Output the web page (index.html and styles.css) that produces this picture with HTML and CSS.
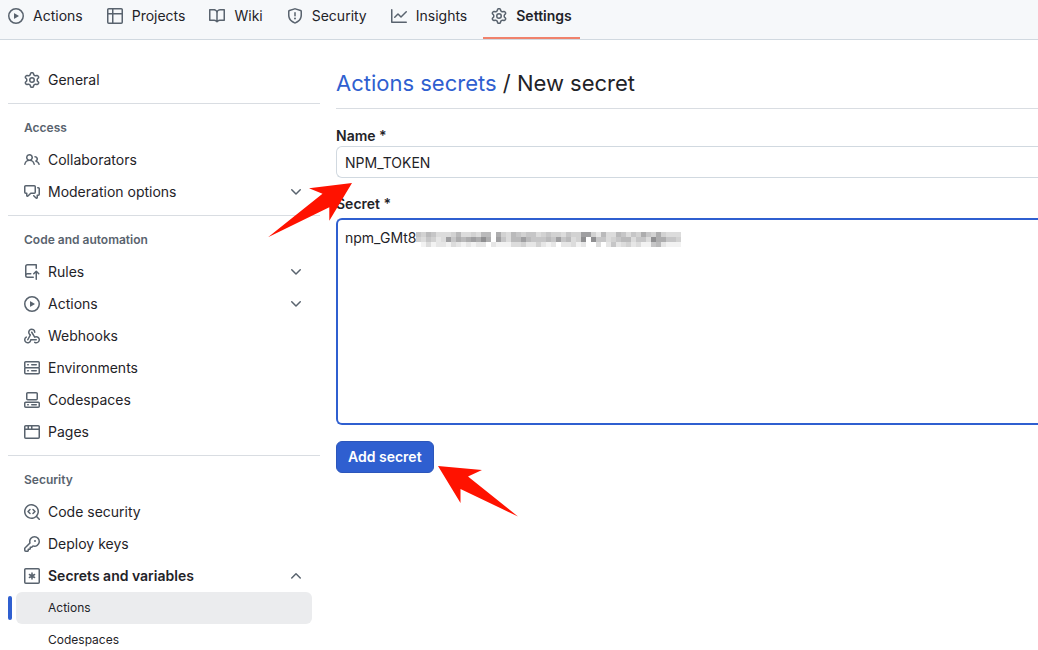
FILE: index.html
```html
<!DOCTYPE html>
<html lang="en">
<head>
<meta charset="utf-8">
<title>Actions secrets / New secret</title>
<link rel="stylesheet" href="styles.css">
</head>
<body>
<svg class="sprite" aria-hidden="true">
  <symbol id="play" viewBox="0 0 16 16"><path d="M8 0a8 8 0 1 1 0 16A8 8 0 0 1 8 0ZM1.5 8a6.5 6.5 0 1 0 13 0 6.5 6.5 0 0 0-13 0Zm4.879-2.773 4.264 2.559a.25.25 0 0 1 0 .428l-4.264 2.559A.25.25 0 0 1 6 10.559V5.442a.25.25 0 0 1 .379-.215Z"/></symbol>
  <symbol id="table" viewBox="0 0 16 16"><path d="M0 1.75C0 .784.784 0 1.75 0h12.5C15.216 0 16 .784 16 1.75v12.5A1.75 1.75 0 0 1 14.25 16H1.75A1.75 1.75 0 0 1 0 14.25ZM6.5 6.5v8h7.75a.25.25 0 0 0 .25-.25V6.5Zm8-1.5V1.75a.25.25 0 0 0-.25-.25H6.5V5Zm-13 1.5v7.75c0 .138.112.25.25.25H5v-8ZM5 5V1.5H1.75a.25.25 0 0 0-.25.25V5Z"/></symbol>
  <symbol id="book" viewBox="0 0 16 16"><path d="M0 1.75A.75.75 0 0 1 .75 1h4.253c1.227 0 2.317.59 3 1.501A3.743 3.743 0 0 1 11.006 1h4.245a.75.75 0 0 1 .75.75v10.5a.75.75 0 0 1-.75.75h-4.507a2.25 2.25 0 0 0-1.591.659l-.622.621a.75.75 0 0 1-1.06 0l-.622-.621A2.25 2.25 0 0 0 5.258 13H.75a.75.75 0 0 1-.75-.75Zm7.251 10.324.004-5.073-.002-2.253A2.25 2.25 0 0 0 5.003 2.5H1.5v9h3.757a3.75 3.75 0 0 1 1.994.574ZM8.755 4.75l-.004 7.322a3.752 3.752 0 0 1 1.992-.572H14.5v-9h-3.495a2.25 2.25 0 0 0-2.25 2.25Z"/></symbol>
  <symbol id="shield" viewBox="0 0 16 16"><path d="M7.467.133a1.748 1.748 0 0 1 1.066 0l5.25 1.68A1.75 1.75 0 0 1 15 3.48V7c0 1.566-.32 3.182-1.303 4.682-.983 1.498-2.585 2.813-5.032 3.855a1.697 1.697 0 0 1-1.33 0c-2.447-1.042-4.049-2.357-5.032-3.855C1.32 10.182 1 8.566 1 7V3.48a1.75 1.75 0 0 1 1.217-1.667Zm.61 1.429a.25.25 0 0 0-.153 0l-5.25 1.68a.25.25 0 0 0-.174.238V7c0 1.358.275 2.666 1.057 3.86.784 1.194 2.121 2.34 4.366 3.297a.196.196 0 0 0 .154 0c2.245-.956 3.582-2.104 4.366-3.298C13.225 9.666 13.5 8.36 13.5 7V3.48a.251.251 0 0 0-.174-.237l-5.25-1.68ZM8.75 4.75v3a.75.75 0 0 1-1.5 0v-3a.75.75 0 0 1 1.5 0ZM9 10.5a1 1 0 1 1-2 0 1 1 0 0 1 2 0Z"/></symbol>
  <symbol id="graph" viewBox="0 0 16 16"><path d="M1.5 1.75V13.5h13.75a.75.75 0 0 1 0 1.5H.75a.75.75 0 0 1-.75-.75V1.75a.75.75 0 0 1 1.5 0Zm14.28 2.53-5.25 5.25a.75.75 0 0 1-1.06 0L7 7.06 4.28 9.78a.751.751 0 0 1-1.042-.018.751.751 0 0 1-.018-1.042l3.25-3.25a.75.75 0 0 1 1.06 0L10 7.94l4.72-4.72a.751.751 0 0 1 1.042.018.751.751 0 0 1 .018 1.042Z"/></symbol>
  <symbol id="gear" viewBox="0 0 16 16"><path d="M8 0a8.2 8.2 0 0 1 .701.031C9.444.095 9.99.645 10.16 1.29l.288 1.107c.018.066.079.158.212.224.231.114.454.243.668.386.123.082.233.09.299.071l1.103-.303c.644-.176 1.392.021 1.82.63.27.385.506.792.704 1.218.315.675.111 1.422-.364 1.891l-.814.806c-.049.048-.098.147-.088.294.016.257.016.515 0 .772-.01.147.038.246.088.294l.814.806c.475.469.679 1.216.364 1.891a7.977 7.977 0 0 1-.704 1.217c-.428.61-1.176.807-1.82.63l-1.102-.302c-.067-.019-.177-.011-.3.071a5.909 5.909 0 0 1-.668.386c-.133.066-.194.158-.211.224l-.29 1.106c-.168.646-.715 1.196-1.458 1.26a8.006 8.006 0 0 1-1.402 0c-.743-.064-1.289-.614-1.458-1.26l-.289-1.106c-.018-.066-.079-.158-.212-.224a5.738 5.738 0 0 1-.668-.386c-.123-.082-.233-.09-.299-.071l-1.103.303c-.644.176-1.392-.021-1.82-.63a8.12 8.12 0 0 1-.704-1.218c-.315-.675-.111-1.422.363-1.891l.815-.806c.05-.048.098-.147.088-.294a6.214 6.214 0 0 1 0-.772c.01-.147-.038-.246-.088-.294l-.815-.806C.635 6.045.431 5.298.746 4.623a7.92 7.92 0 0 1 .704-1.217c.428-.61 1.176-.807 1.82-.63l1.102.302c.067.019.177.011.3-.071.214-.143.437-.272.668-.386.133-.066.194-.158.211-.224l.29-1.106C6.009.645 6.556.095 7.299.03 7.53.01 7.764 0 8 0Zm-.571 1.525c-.036.003-.108.036-.137.146l-.289 1.105c-.147.561-.549.967-.998 1.189-.173.086-.34.183-.5.29-.417.278-.97.423-1.529.27l-1.103-.303c-.109-.03-.175.016-.195.045-.22.312-.412.644-.573.99-.014.031-.021.11.059.19l.815.806c.411.406.562.957.53 1.456a4.709 4.709 0 0 0 0 .582c.032.499-.119 1.05-.53 1.456l-.815.806c-.081.08-.073.159-.059.19.162.346.353.677.573.989.02.03.085.076.195.046l1.102-.303c.56-.153 1.113-.008 1.53.27.161.107.328.204.501.29.447.222.85.629.997 1.189l.289 1.105c.029.109.101.143.137.146a6.6 6.6 0 0 0 1.142 0c.036-.003.108-.036.137-.146l.289-1.105c.147-.561.549-.967.998-1.189.173-.086.34-.183.5-.29.417-.278.97-.423 1.529-.27l1.103.303c.109.029.175-.016.195-.045.22-.313.411-.644.573-.99.014-.031.021-.11-.059-.19l-.815-.806c-.411-.406-.562-.957-.53-1.456a4.709 4.709 0 0 0 0-.582c-.032-.499.119-1.05.53-1.456l.815-.806c.081-.08.073-.159.059-.19a6.464 6.464 0 0 0-.573-.989c-.02-.03-.085-.076-.195-.046l-1.102.303c-.56.153-1.113.008-1.53-.27a4.44 4.44 0 0 0-.501-.29c-.447-.222-.85-.629-.997-1.189l-.289-1.105c-.029-.11-.101-.143-.137-.146a6.6 6.6 0 0 0-1.142 0ZM11 8a3 3 0 1 1-6 0 3 3 0 0 1 6 0ZM9.5 8a1.5 1.5 0 1 0-3.001.001A1.5 1.5 0 0 0 9.5 8Z"/></symbol>
  <symbol id="people" viewBox="0 0 16 16"><path d="M2 5.5a3.5 3.5 0 1 1 5.898 2.549 5.508 5.508 0 0 1 3.034 4.084.75.75 0 1 1-1.482.235 4 4 0 0 0-7.9 0 .75.75 0 0 1-1.482-.236A5.507 5.507 0 0 1 3.102 8.05 3.493 3.493 0 0 1 2 5.5ZM11 4a3.001 3.001 0 0 1 2.22 5.018 5.01 5.01 0 0 1 2.56 3.012.749.749 0 0 1-.885.954.752.752 0 0 1-.549-.514 3.507 3.507 0 0 0-2.522-2.372.75.75 0 0 1-.574-.73v-.352a.75.75 0 0 1 .416-.672A1.5 1.5 0 0 0 11 5.5.75.75 0 0 1 11 4Zm-5.5-.5a2 2 0 1 0-.001 3.999A2 2 0 0 0 5.5 3.5Z"/></symbol>
  <symbol id="discussion" viewBox="0 0 16 16"><path d="M1.75 1h8.5c.966 0 1.75.784 1.75 1.75v5.5A1.75 1.75 0 0 1 10.25 10H7.061l-2.574 2.573A1.458 1.458 0 0 1 2 11.543V10h-.25A1.75 1.75 0 0 1 0 8.25v-5.5C0 1.784.784 1 1.75 1ZM1.5 2.75v5.5c0 .138.112.25.25.25h1a.75.75 0 0 1 .75.75v2.19l2.72-2.72a.749.749 0 0 1 .53-.22h3.5a.25.25 0 0 0 .25-.25v-5.5a.25.25 0 0 0-.25-.25h-8.5a.25.25 0 0 0-.25.25Zm13 2a.25.25 0 0 0-.25-.25h-.5a.75.75 0 0 1 0-1.5h.5c.966 0 1.75.784 1.75 1.75v5.5A1.75 1.75 0 0 1 14.25 12H14v1.543a1.458 1.458 0 0 1-2.487 1.03L9.22 12.28a.749.749 0 0 1 .326-1.275.749.749 0 0 1 .734.215l2.22 2.22v-2.19a.75.75 0 0 1 .75-.75h1a.25.25 0 0 0 .25-.25Z"/></symbol>
  <symbol id="repo-push" viewBox="0 0 16 16"><path d="M1 2.5A2.5 2.5 0 0 1 3.5 0h8.75a.75.75 0 0 1 .75.75v3.5a.75.75 0 0 1-1.5 0V1.5h-8a1 1 0 0 0-1 1v6.708A2.493 2.493 0 0 1 3.5 9h3.25a.75.75 0 0 1 0 1.5H3.5a1 1 0 0 0 0 2h5.75a.75.75 0 0 1 0 1.5H3.5A2.5 2.5 0 0 1 1 11.5Zm13.23 7.79-1.224-1.224v6.184a.75.75 0 0 1-1.5 0V9.066L10.28 10.29a.75.75 0 0 1-1.06-1.061l2.505-2.504a.75.75 0 0 1 1.06 0L15.29 9.23a.751.751 0 0 1-.018 1.042.751.751 0 0 1-1.042.018Z"/></symbol>
  <symbol id="webhook" viewBox="0 0 16 16"><path d="M5.5 4.25a2.25 2.25 0 0 1 4.5 0 .75.75 0 0 0 1.5 0 3.75 3.75 0 1 0-6.14 2.889l-2.272 4.258a.75.75 0 0 0 1.324.706L7 7.25a.75.75 0 0 0-.309-1.015A2.25 2.25 0 0 1 5.5 4.25Z"/><path d="M7.364 3.607a.75.75 0 0 1 1.03.257l2.608 4.349a3.75 3.75 0 1 1-.628 6.785.75.75 0 0 1 .752-1.299 2.25 2.25 0 1 0-.033-3.88.75.75 0 0 1-1.03-.256L7.107 4.636a.75.75 0 0 1 .257-1.03Z"/><path d="M2.9 8.776A.75.75 0 0 1 2.625 9.8 2.25 2.25 0 1 0 6 11.75a.75.75 0 0 1 .75-.751h5.5a.75.75 0 0 1 0 1.5H7.425a3.751 3.751 0 1 1-5.55-3.998.75.75 0 0 1 1.024.274Z"/></symbol>
  <symbol id="server" viewBox="0 0 16 16"><path d="M1.75 1h12.5c.966 0 1.75.784 1.75 1.75v4c0 .372-.116.717-.314 1 .198.283.314.628.314 1v4a1.75 1.75 0 0 1-1.75 1.75H1.75A1.75 1.75 0 0 1 0 12.75v-4c0-.358.109-.707.314-1a1.739 1.739 0 0 1-.314-1v-4C0 1.784.784 1 1.75 1ZM1.5 2.75v4c0 .138.112.25.25.25h12.5a.25.25 0 0 0 .25-.25v-4a.25.25 0 0 0-.25-.25H1.75a.25.25 0 0 0-.25.25Zm.25 5.75a.25.25 0 0 0-.25.25v4c0 .138.112.25.25.25h12.5a.25.25 0 0 0 .25-.25v-4a.25.25 0 0 0-.25-.25ZM7 4.75A.75.75 0 0 1 7.75 4h4.5a.75.75 0 0 1 0 1.5h-4.5A.75.75 0 0 1 7 4.75ZM7.75 10h4.5a.75.75 0 0 1 0 1.5h-4.5a.75.75 0 0 1 0-1.5ZM3 4.75A.75.75 0 0 1 3.75 4h.5a.75.75 0 0 1 0 1.5h-.5A.75.75 0 0 1 3 4.75ZM3.75 10h.5a.75.75 0 0 1 0 1.5h-.5a.75.75 0 0 1 0-1.5Z"/></symbol>
  <symbol id="codespaces" viewBox="0 0 16 16"><path d="M0 11.25c0-.966.784-1.75 1.75-1.75h12.5c.966 0 1.75.784 1.75 1.75v3A1.75 1.75 0 0 1 14.25 16H1.75A1.75 1.75 0 0 1 0 14.25Zm2-9.5C2 .784 2.784 0 3.75 0h8.5C13.216 0 14 .784 14 1.75v5a1.75 1.75 0 0 1-1.75 1.75h-8.5A1.75 1.75 0 0 1 2 6.75Zm1.75-.25a.25.25 0 0 0-.25.25v5c0 .138.112.25.25.25h8.5a.25.25 0 0 0 .25-.25v-5a.25.25 0 0 0-.25-.25Zm-2 9.5a.25.25 0 0 0-.25.25v3c0 .138.112.25.25.25h12.5a.25.25 0 0 0 .25-.25v-3a.25.25 0 0 0-.25-.25Z"/><path d="M7 12.75a.75.75 0 0 1 .75-.75h4.5a.75.75 0 0 1 0 1.5h-4.5a.75.75 0 0 1-.75-.75Zm-4 0a.75.75 0 0 1 .75-.75h.5a.75.75 0 0 1 0 1.5h-.5a.75.75 0 0 1-.75-.75Z"/></symbol>
  <symbol id="browser" viewBox="0 0 16 16"><path d="M0 2.75C0 1.784.784 1 1.75 1h12.5c.966 0 1.75.784 1.75 1.75v10.5A1.75 1.75 0 0 1 14.25 15H1.75A1.75 1.75 0 0 1 0 13.25ZM14.5 6h-13v7.25c0 .138.112.25.25.25h12.5a.25.25 0 0 0 .25-.25Zm-6-3.5v2h6V2.75a.25.25 0 0 0-.25-.25ZM5 2.5v2h2v-2Zm-3.25 0a.25.25 0 0 0-.25.25V4.5h2v-2Z"/></symbol>
  <symbol id="codescan" viewBox="0 0 16 16"><path d="M8.47 4.97a.75.75 0 0 0 0 1.06L9.94 7.5 8.47 8.97a.75.75 0 1 0 1.06 1.06l2-2a.75.75 0 0 0 0-1.06l-2-2a.75.75 0 0 0-1.06 0ZM6.53 6.03a.75.75 0 0 0-1.06-1.06l-2 2a.75.75 0 0 0 0 1.06l2 2a.75.75 0 1 0 1.06-1.06L5.06 7.5l1.47-1.47Z"/><path d="M12.246 13.307a7.501 7.501 0 1 1 1.06-1.06l2.474 2.473a.749.749 0 1 1-1.06 1.06l-2.474-2.473ZM1.5 7.5a6.002 6.002 0 0 0 3.608 5.504 6.002 6.002 0 0 0 6.486-1.117.748.748 0 0 1 .292-.293A6 6 0 1 0 1.5 7.5Z"/></symbol>
  <symbol id="key" viewBox="0 0 16 16"><path d="M10.5 0a5.499 5.499 0 1 1-1.288 10.848l-.932.932a.749.749 0 0 1-.53.22H7v.75a.749.749 0 0 1-.22.53l-.5.5a.749.749 0 0 1-.53.22H5v.75a.749.749 0 0 1-.22.53l-.5.5a.749.749 0 0 1-.53.22h-2A1.75 1.75 0 0 1 0 14.25v-2c0-.199.079-.389.22-.53l4.932-4.932A5.5 5.5 0 0 1 10.5 0Zm-4 5.5c-.001.431.069.86.205 1.269a.75.75 0 0 1-.181.768L1.5 12.56v1.69c0 .138.112.25.25.25h1.69l.06-.06v-1.19a.75.75 0 0 1 .75-.75h1.19l.06-.06v-1.19a.75.75 0 0 1 .75-.75h1.19l1.023-1.025a.75.75 0 0 1 .768-.18A4 4 0 1 0 6.5 5.5ZM11 6a1 1 0 1 1 0-2 1 1 0 0 1 0 2Z"/></symbol>
  <symbol id="asterisk" viewBox="0 0 16 16"><path fill="none" stroke="currentColor" stroke-width="1.5" d="M1.75.75h12.5a1 1 0 0 1 1 1v12.5a1 1 0 0 1-1 1H1.75a1 1 0 0 1-1-1V1.75a1 1 0 0 1 1-1Z"/><path fill="none" stroke="currentColor" stroke-width="1.5" stroke-linecap="round" d="M8 5v6M5.400 6.500l5.200 3M10.600 6.500 5.400 9.500"/></symbol>
  <symbol id="chevron-down" viewBox="0 0 16 16"><path d="M12.78 5.22a.749.749 0 0 1 0 1.06l-4.25 4.25a.749.749 0 0 1-1.06 0L3.22 6.28a.749.749 0 1 1 1.06-1.06L8 8.939l3.72-3.719a.749.749 0 0 1 1.06 0Z"/></symbol>
  <symbol id="chevron-up" viewBox="0 0 16 16"><path d="M3.22 10.53a.749.749 0 0 1 0-1.06l4.25-4.25a.749.749 0 0 1 1.06 0l4.25 4.25a.749.749 0 1 1-1.06 1.06L8 6.811 4.28 10.53a.749.749 0 0 1-1.06 0Z"/></symbol>
</svg>

<nav class="topnav" aria-label="Repository">
  <a class="tab" href="#"><svg class="icon"><use href="#play"/></svg>Actions</a>
  <a class="tab" href="#"><svg class="icon"><use href="#table"/></svg>Projects</a>
  <a class="tab" href="#"><svg class="icon"><use href="#book"/></svg>Wiki</a>
  <a class="tab" href="#"><svg class="icon"><use href="#shield"/></svg>Security</a>
  <a class="tab" href="#"><svg class="icon"><use href="#graph"/></svg>Insights</a>
  <a class="tab tab-current" href="#" aria-current="page"><svg class="icon"><use href="#gear"/></svg>Settings</a>
</nav>

<div class="layout">
  <nav class="sidebar" aria-label="Settings">
    <div class="group">
      <a class="item" href="#"><svg class="icon"><use href="#gear"/></svg>General</a>
    </div>
    <div class="group">
      <h2 class="group-title">Access</h2>
      <a class="item" href="#"><svg class="icon"><use href="#people"/></svg>Collaborators</a>
      <button class="item" type="button"><svg class="icon"><use href="#discussion"/></svg>Moderation options<svg class="icon chevron"><use href="#chevron-down"/></svg></button>
    </div>
    <div class="group">
      <h2 class="group-title">Code and automation</h2>
      <button class="item" type="button"><svg class="icon"><use href="#repo-push"/></svg>Rules<svg class="icon chevron"><use href="#chevron-down"/></svg></button>
      <button class="item" type="button"><svg class="icon"><use href="#play"/></svg>Actions<svg class="icon chevron"><use href="#chevron-down"/></svg></button>
      <a class="item" href="#"><svg class="icon"><use href="#webhook"/></svg>Webhooks</a>
      <a class="item" href="#"><svg class="icon"><use href="#server"/></svg>Environments</a>
      <a class="item" href="#"><svg class="icon"><use href="#codespaces"/></svg>Codespaces</a>
      <a class="item" href="#"><svg class="icon"><use href="#browser"/></svg>Pages</a>
    </div>
    <div class="group">
      <h2 class="group-title">Security</h2>
      <a class="item" href="#"><svg class="icon"><use href="#codescan"/></svg>Code security</a>
      <a class="item" href="#"><svg class="icon"><use href="#key"/></svg>Deploy keys</a>
      <button class="item item-open" type="button" aria-expanded="true"><svg class="icon"><use href="#asterisk"/></svg>Secrets and variables<svg class="icon chevron"><use href="#chevron-up"/></svg></button>
      <a class="item subitem subitem-current" href="#" aria-current="page">Actions</a>
      <a class="item subitem" href="#">Codespaces</a>
    </div>
  </nav>

  <main class="content">
    <h1 class="title"><a class="title-link" href="#">Actions secrets</a> / New secret</h1>
    <form class="form">
      <div class="field">
        <label class="label" for="name">Name *</label>
        <input class="control" id="name" type="text" value="NPM_TOKEN">
        <svg class="arrow arrow-name" viewBox="0 0 84 54" aria-hidden="true"><path d="M84 0 41 5.300 54.500 10.700 0 54.300 61.300 24.300V37.700Z"/></svg>
      </div>
      <div class="field">
        <label class="label" for="secret">Secret *</label>
        <textarea class="control control-secret" id="secret" spellcheck="false">npm_GMt8</textarea>
        <svg class="mosaic" id="mosaic" viewBox="0 0 54 3" preserveAspectRatio="none" shape-rendering="crispEdges" aria-hidden="true"></svg>
      </div>
      <div class="actions">
        <button class="submit" type="button">Add secret</button>
        <svg class="arrow arrow-submit" viewBox="0 0 80 51" aria-hidden="true"><path d="M0 0 44 4 30 10.400 80 50.500 22.500 23V37Z"/></svg>
      </div>
    </form>
  </main>
</div>
<script src="mosaic.js"></script>
</body>
</html>
```

FILE: styles.css
```css
* {
  box-sizing: border-box;
}

html {
  scrollbar-width: none;
}

body {
  margin: 0;
  background: #fff;
  color: #1f2328;
  font: 14px/20px Inter, "Liberation Sans", sans-serif;
}

a {
  color: inherit;
  text-decoration: none;
}

.sprite {
  display: none;
}

.icon {
  flex: none;
  width: 16px;
  height: 16px;
  color: #59636e;
  fill: currentColor;
}

.topnav {
  display: flex;
  gap: 8px;
  height: 40px;
  background: #f6f8fa;
  border-bottom: 1px solid #d1d9e0;
}

.tab {
  display: flex;
  gap: 9px;
  padding: 6px 8px 11px;
  align-items: center;
  border-bottom: 2px solid transparent;
}

.tab-current {
  font-weight: 600;
  border-bottom-color: #f0826c;
}

.layout {
  display: flex;
  gap: 16px;
  padding: 24px 0 0 8px;
}

.sidebar {
  flex: none;
  width: 312px;
}

.group + .group {
  margin-top: 7px;
  padding-top: 8px;
  border-top: 1px solid #d9dde2;
}

.group-title {
  margin: 0;
  padding: 6px 16px;
  color: #59636e;
  font-size: 12px;
  line-height: 20px;
  font-weight: 600;
}

.item {
  display: flex;
  align-items: center;
  gap: 8px;
  width: 296px;
  margin: 0 8px;
  padding: 6px 8px;
  border: 0;
  border-radius: 6px;
  background: none;
  color: inherit;
  font: inherit;
  text-align: left;
}

.item-open {
  font-weight: 600;
}

.chevron {
  margin-left: auto;
}

.subitem {
  position: relative;
  padding-left: 32px;
  font-size: 12px;
}

.subitem-current {
  background: #ebecee;
}

.subitem-current::before {
  content: "";
  position: absolute;
  left: -8px;
  top: 4px;
  width: 4px;
  height: 24px;
  border-radius: 6px;
  background: #2f5fd0;
}

.content {
  flex: 1;
  min-width: 0;
}

.title {
  margin: 0 0 17px;
  padding: 3px 0 9px;
  border-bottom: 1px solid #d9dde2;
  font-size: 22px;
  line-height: 32px;
  font-weight: 400;
}

.title-link {
  color: #2f5fd0;
}

.form {
  display: flex;
  flex-direction: column;
  gap: 16px;
}

.field {
  position: relative;
  display: flex;
  flex-direction: column;
}

.label {
  font-weight: 600;
}

.control {
  width: 100%;
  height: 32px;
  padding: 5px 8px;
  border: 1px solid #d1d9e0;
  border-right: 0;
  border-radius: 6px 0 0 6px;
  outline: 0;
  background: #fff;
  color: inherit;
  font: inherit;
}

.control-secret {
  height: 207px;
  margin-top: 4px;
  padding: 8px 7px;
  border: 2px solid #2f5fd0;
  border-right: 0;
  resize: none;
}

.actions {
  position: relative;
  display: flex;
}

.submit {
  padding: 5px 11px;
  border: 1px solid #2c56bb;
  border-radius: 6px;
  background: #2f5fd0;
  color: #fff;
  font: inherit;
  font-weight: 600;
}

.arrow {
  position: absolute;
  overflow: visible;
  fill: #ff1200;
  z-index: 1;
}

.arrow-name {
  left: -68px;
  top: 57px;
  width: 84px;
  height: 54px;
}

.arrow-submit {
  left: 102px;
  top: 25px;
  width: 80px;
  height: 51px;
}

.mosaic {
  position: absolute;
  left: 80px;
  top: 38px;
  width: 270px;
  height: 15px;
}
```

FILE: mosaic.js
```js
// Redaction blocks over the secret: one digit per block, 0 = clear, 9 = darkest.
const rows = [
  "54653334633436607436545534544354488426336535475474333360",
  "43542385767879708536686555658563490955345663553977554440",
  "013122132121220211133422421202231200302523423115621110"
];
const shades = ["#fff", "#f2f2f2", "#e6e6e6", "#dcdcdc", "#d2d2d2", "#c6c6c7", "#bababb", "#adadae", "#9f9fa1", "#8f8f91"];
const svg = document.getElementById("mosaic");
rows.forEach((row, y) => {
  [...row].slice(0, 53).forEach((level, x) => {
    const rect = document.createElementNS("http://www.w3.org/2000/svg", "rect");
    rect.setAttribute("x", x);
    rect.setAttribute("y", y);
    rect.setAttribute("width", 1);
    rect.setAttribute("height", 1);
    rect.setAttribute("fill", shades[level]);
    svg.append(rect);
  });
});
```
